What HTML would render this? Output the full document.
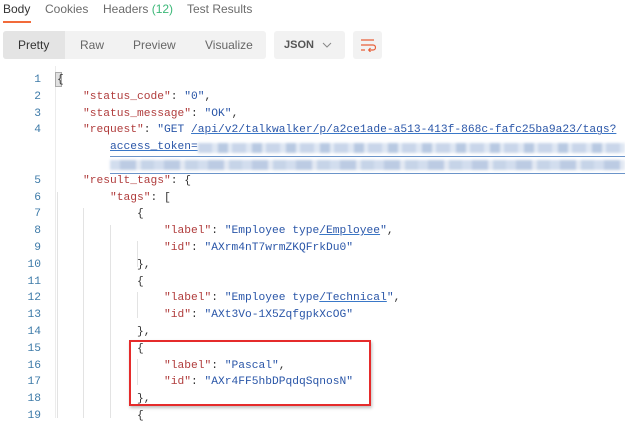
<!DOCTYPE html>
<html><head><style>
body{margin:0;width:625px;height:418px;overflow:hidden;background:#fff;position:relative;font-family:"Liberation Sans",sans-serif}
.a{position:absolute;white-space:pre}
.tab{font-size:12px;color:#6b6b6b;top:2px}
.code{font-family:"Liberation Mono",monospace;font-size:11.25px;line-height:16.8px;white-space:pre;position:absolute;left:0;top:72px;width:625px}
.ln{position:absolute;left:0;width:41px;text-align:right;color:#3d7aa8;font-family:"Liberation Mono",monospace;font-size:11.25px;white-space:pre;line-height:16.8px;top:72px}
.k{color:#b03c3c}.v{color:#2a56a8}.p{color:#333}
.u{text-decoration:underline;text-decoration-color:#3a78c8}
.g{position:absolute;width:1px;background:#e3e3e3}
</style></head><body>
<div class="a tab" style="left:3px;color:#333">Body</div>
<div class="a" style="left:3px;top:21px;width:28px;height:2px;background:#f26b3a"></div>
<div class="a tab" style="left:45px">Cookies</div>
<div class="a tab" style="left:103px">Headers <span style="color:#3cb878">(12)</span></div>
<div class="a tab" style="left:187px">Test Results</div>

<div class="a" style="left:3px;top:31px;width:263px;height:28px;background:#f2f2f2;border-radius:3px"></div>
<div class="a" style="left:3px;top:31px;width:62px;height:28px;background:#e4e4e4;border-radius:3px 0 0 3px"></div>
<div class="a" style="left:18px;top:38px;font-size:12px;color:#333">Pretty</div>
<div class="a" style="left:80px;top:38px;font-size:12px;color:#666">Raw</div>
<div class="a" style="left:133px;top:38px;font-size:12px;color:#666">Preview</div>
<div class="a" style="left:205px;top:38px;font-size:12px;color:#666">Visualize</div>
<div class="a" style="left:274px;top:31px;width:71px;height:28px;background:#f2f2f2;border-radius:3px"></div>
<div class="a" style="left:284px;top:39px;font-size:11px;font-weight:bold;color:#555">JSON</div>
<svg class="a" style="left:322px;top:42px" width="10" height="6"><path d="M1 1 L5 5 L9 1" fill="none" stroke="#888" stroke-width="1"/></svg>
<div class="a" style="left:353px;top:31px;width:29px;height:28px;background:#f2f2f2;border-radius:3px"></div>
<svg class="a" style="left:360px;top:38px" width="16" height="14"><path d="M1 2H14M1 7H13a2.5 2.5 0 0 1 0 5H9M10.5 10L8.7 12l1.8 2M1 12H5" fill="none" stroke="#e8603a" stroke-width="1.2"/></svg>

<div class="g" style="left:55px;top:66px;height:352px;background:#ececec"></div>
<div class="g" style="left:57px;top:192px;height:226px"></div>
<div class="g" style="left:83px;top:208px;height:210px"></div>
<div class="g" style="left:110px;top:225px;height:193px"></div>
<div class="g" style="left:137px;top:241px;height:26px"></div>
<div class="g" style="left:137px;top:292px;height:26px"></div>
<div class="g" style="left:137px;top:359px;height:26px"></div>
<div class="a" style="left:55px;top:72px;width:7px;height:15px;background:#e0e0e0;border:1px solid #aaa;box-sizing:border-box"></div>

<div class="ln">1
2
3
4


5
6
7
8
9
10
11
12
13
14
15
16
17
18
19</div>
<div class="code"><span style="padding-left:57px" class="p">{</span>
<span style="padding-left:83px"><span class="k">"status_code"</span><span class="p">: </span><span class="v">"0"</span><span class="p">,</span></span>
<span style="padding-left:83px"><span class="k">"status_message"</span><span class="p">: </span><span class="v">"OK"</span><span class="p">,</span></span>
<span style="padding-left:83px"><span class="k">"request"</span><span class="p">: </span><span class="v">"GET <span class="u">/api/v2/talkwalker/p/a2ce1ade-a513-413f-868c-fafc25ba9a23/tags?</span></span></span>
<span style="padding-left:110px" class="v u">access_token=</span>

<span style="padding-left:83px"><span class="k">"result_tags"</span><span class="p">: {</span></span>
<span style="padding-left:110px"><span class="k">"tags"</span><span class="p">: [</span></span>
<span style="padding-left:137px" class="p">{</span>
<span style="padding-left:164px"><span class="k">"label"</span><span class="p">: </span><span class="v">"Employee type<span class="u">/Employee</span>"</span><span class="p">,</span></span>
<span style="padding-left:164px"><span class="k">"id"</span><span class="p">: </span><span class="v">"AXrm4nT7wrmZKQFrkDu0"</span></span>
<span style="padding-left:137px" class="p">},</span>
<span style="padding-left:137px" class="p">{</span>
<span style="padding-left:164px"><span class="k">"label"</span><span class="p">: </span><span class="v">"Employee type<span class="u">/Technical</span>"</span><span class="p">,</span></span>
<span style="padding-left:164px"><span class="k">"id"</span><span class="p">: </span><span class="v">"AXt3Vo-1X5ZqfgpkXcOG"</span></span>
<span style="padding-left:137px" class="p">},</span>
<span style="padding-left:137px" class="p">{</span>
<span style="padding-left:164px"><span class="k">"label"</span><span class="p">: </span><span class="v">"Pascal"</span><span class="p">,</span></span>
<span style="padding-left:164px"><span class="k">"id"</span><span class="p">: </span><span class="v">"AXr4FF5hbDPqdqSqnosN"</span></span>
<span style="padding-left:137px" class="p">},</span>
<span style="padding-left:137px" class="p">{</span></div>

<div class="a" style="left:198px;top:143px;width:427px;height:10px;background:repeating-linear-gradient(90deg,#c9d6ea 0 14px,#dfe7f3 14px 20px,#b8c9e2 20px 30px,#e4ebf5 30px 34px);filter:blur(1.2px)"></div>
<div class="a" style="left:110px;top:160px;width:515px;height:10px;background:repeating-linear-gradient(90deg,#d2ddee 0 10px,#bccbe3 10px 26px,#e3e9f3 26px 31px,#c6d4e8 31px 44px);filter:blur(1.2px)"></div>
<div class="a" style="left:110px;top:156px;width:515px;height:1px;background:#6b94c9"></div>
<div class="a" style="left:110px;top:173px;width:515px;height:1px;background:#6b94c9"></div>

<div class="a" style="left:129px;top:340px;width:242px;height:66px;border:2px solid #e52b2b;box-sizing:border-box;box-shadow:1px 2px 3px rgba(0,0,0,.25)"></div>
</body></html>
